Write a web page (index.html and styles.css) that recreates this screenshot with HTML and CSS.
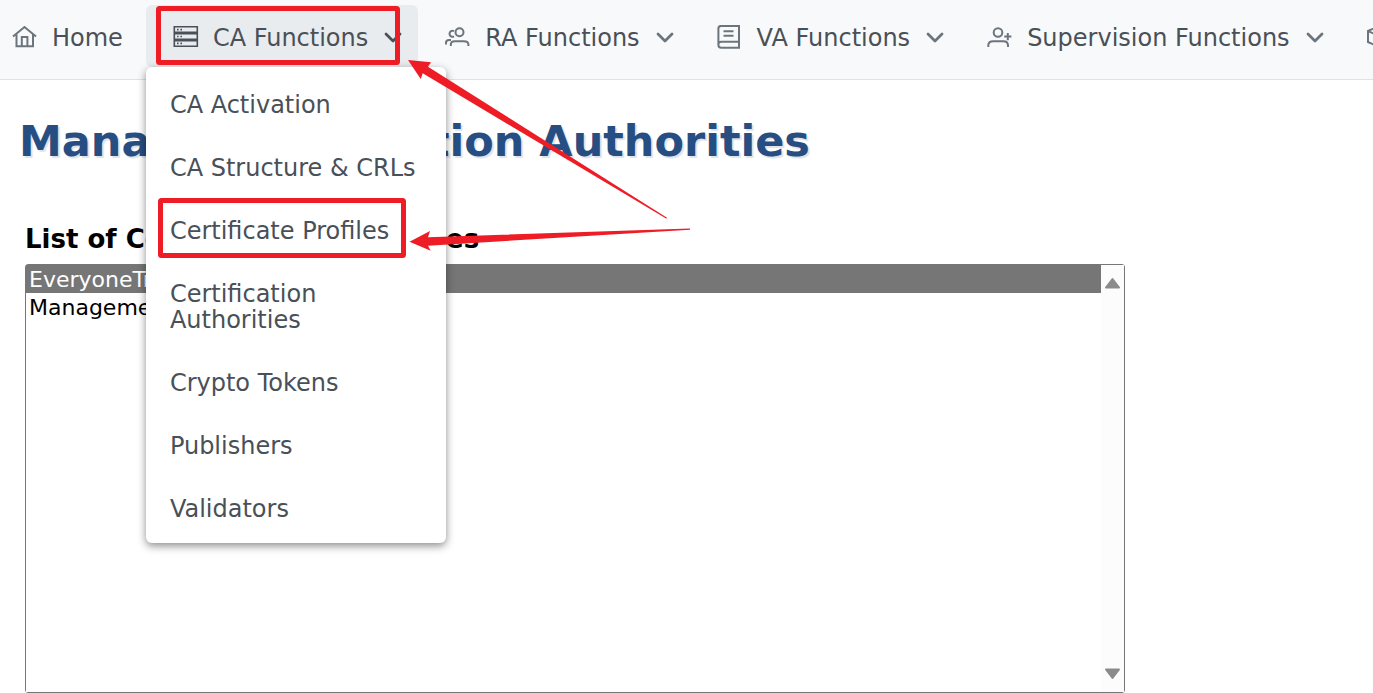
FILE: index.html
```html
<!DOCTYPE html>
<html lang="en">
<head>
    <meta charset="UTF-8">
    <meta name="viewport" content="width=device-width, initial-scale=1.0">
    <title>Manage Certification Authorities</title>
    <link rel="stylesheet" href="styles.css">
</head>
<body>
    <nav class="navbar">
        <a class="nav-item home" href="#">
            <svg class="icon" viewBox="0 2 26 26"><path d="M1 13.5 12.5 4 24 13.5M4.5 11.5V23.3H21V11.5M9.8 23V14h5.6v9"/></svg>
            <span>Home</span>
        </a>
        <div class="nav-group">
            <button class="nav-item active" type="button" aria-expanded="true">
                <svg class="icon" viewBox="0 2 26 26"><path d="M1.3 3.8h23v5.6h-23zM1.3 10.7h23v5.6h-23zM1.3 17.6h23v5.6h-23z"/><path class="dots" d="M4 6.6h1.6M7.4 6.6H9M4 13.5h1.6M7.4 13.5H9M4 20.4h1.6M7.4 20.4H9"/></svg>
                <span>CA Functions</span>
                <svg class="chevron" viewBox="0 2 22 26"><path d="m4 11 7 7 7-7"/></svg>
            </button>
            <div class="menu">
                <a href="#">CA Activation</a>
                <a href="#">CA Structure &amp; CRLs</a>
                <a href="#">Certificate Profiles</a>
                <a href="#">Certification Authorities</a>
                <a href="#">Crypto Tokens</a>
                <a href="#">Publishers</a>
                <a href="#">Validators</a>
            </div>
        </div>
        <button class="nav-item" type="button">
            <svg class="icon" viewBox="0 2 26 26"><circle cx="14.5" cy="9.3" r="4"/><path d="M5.8 23v-1.5q0-3.3 4-3.3h9q4.6 0 4.6 3.3V23M9 8.2a3 3 0 1 0 0 5.2M1 21.5v-1.7q0-2.8 3-2.8h2"/></svg>
            <span>RA Functions</span>
            <svg class="chevron" viewBox="0 2 22 26"><path d="m4 11 7 7 7-7"/></svg>
        </button>
        <button class="nav-item" type="button">
            <svg class="icon" viewBox="0 2 26 26"><path d="M22 18.8V2.9H4Q1.4 2.9 1.4 5.6V22q0 2.8 2.8 2.8H22v-6H4.2q-2.8 0-2.8 2.8M6.5 8.2h10M6.5 12.8h10"/></svg>
            <span>VA Functions</span>
            <svg class="chevron" viewBox="0 2 22 26"><path d="m4 11 7 7 7-7"/></svg>
        </button>
        <button class="nav-item" type="button">
            <svg class="icon" viewBox="0 2 26 26"><circle cx="11" cy="9.5" r="4.3"/><path d="M1.3 24v-1.5q0-4.3 5-4.3h10q4.7 0 4.7 4.3V24M20.8 10v7.2M17.2 13.6h7.2"/></svg>
            <span>Supervision Functions</span>
            <svg class="chevron" viewBox="0 2 22 26"><path d="m4 11 7 7 7-7"/></svg>
        </button>
        <button class="nav-item" type="button" aria-label="System Functions">
            <svg class="icon" viewBox="0 2 26 26"><path d="M1 8 12 3l11 5v11l-11 5-11-5zM1 8l11 5 11-5M12 13v11"/></svg>
        </button>
    </nav>

    <main class="content">
        <h1>Manage Certification Authorities</h1>
        <label for="caList">List of Certification Authorities</label>
        <div class="list-box">
            <select id="caList" class="ca-list" size="15">
                <option selected>EveryoneTrustCA</option>
                <option>ManagementCA</option>
            </select>
            <div class="scrollbar" aria-hidden="true">
                <svg width="17" height="12" viewBox="0 0 17 12"><path d="M2 10.500 8.500 2 15 10.500z"/></svg>
                <svg width="17" height="12" viewBox="0 0 17 12"><path d="M2 1.500 8.500 10 15 1.500z"/></svg>
            </div>
        </div>
    </main>

    <!-- highlights and arrows over the page -->
    <svg class="marks" width="700" height="270" viewBox="0 0 700 270">
        <rect x="158.500" y="8.500" width="239" height="54" rx="1"/>
        <rect x="160.500" y="200.500" width="243" height="55" rx="1"/>
        <path d="M408 60 431 62.300 428 66.700 667 217.800 666.500 218.800 422.700 73.300 420.700 79z"/>
        <path d="M409.500 241.700 430 231 428 237.300 690 228.500V229.700L428 245.700 430.700 250.700z"/>
    </svg>
</body>
</html>
```
FILE: styles.css
```css
* {
    box-sizing: border-box;
}

body {
    margin: 0;
    position: relative;
    font-family: "DejaVu Sans", Verdana, sans-serif;
    background-color: #fff;
    color: #000;
}

.navbar {
    display: flex;
    align-items: flex-start;
    height: 80px;
    padding-top: 5px;
    background-color: #f8f9fa;
    border-bottom: 1px solid #dee2e6;
    overflow-x: clip;
}

.nav-group {
    position: relative;
}

.nav-item {
    display: flex;
    flex-shrink: 0;
    align-items: center;
    gap: 14px;
    height: 62px;
    padding: 4px 14px 0 27px;
    border: none;
    border-radius: 6px;
    background: none;
    color: #495057;
    font-family: inherit;
    font-size: 24px;
    line-height: 26px;
    text-decoration: none;
    white-space: nowrap;
    cursor: pointer;
}

.nav-item.home {
    padding-left: 12px;
    padding-right: 23px;
}

.nav-item.active {
    background-color: #e9ecef;
}

.icon,
.chevron {
    flex-shrink: 0;
    width: 26px;
    height: 26px;
    fill: none;
    stroke: #6c757d;
    stroke-width: 2;
}

.active .icon {
    stroke-width: 1.6;
}

.chevron {
    width: 22px;
    stroke-width: 2.8;
    stroke-linecap: round;
    stroke-linejoin: round;
}

.active .icon,
.active .chevron {
    stroke: #495057;
}

.menu {
    position: absolute;
    top: 100%;
    left: 0;
    z-index: 10;
    display: flex;
    flex-direction: column;
    gap: 1px;
    width: 300px;
    padding: 7px 0 3px;
    border-radius: 6px;
    background-color: #fff;
    box-shadow: 0 3px 8px rgba(0, 0, 0, 0.45);
}

.menu a {
    padding: 18px 24px;
    color: #495057;
    font-size: 24px;
    line-height: 26px;
    text-decoration: none;
}

.content {
    padding: 33px 25px 0;
}

h1 {
    margin: 0 0 50px -6px;
    color: #274e82;
    font-size: 43px;
    line-height: 56px;
    text-shadow: 2px 2px 1px #dfe3e8;
}

label {
    display: block;
    margin-bottom: 5px;
    font-size: 26px;
    font-weight: bold;
    line-height: 40px;
}

.list-box {
    display: flex;
    width: 1100px;
    max-width: 100%;
    height: 429px;
    border: 1px solid #767676;
    border-radius: 3px;
}

.ca-list {
    flex: 1;
    min-width: 0;
    padding: 0;
    border: none;
    border-radius: 0;
    outline: none;
    background-color: #fff;
    font-family: inherit;
    font-size: 22px;
}

.ca-list option {
    min-height: 28px;
    padding: 2px 3px 0;
    color: #000;
    line-height: 26px;
}

.ca-list option:checked {
    background: #767676 linear-gradient(#767676, #767676);
    color: #fff;
}

.scrollbar {
    display: flex;
    flex-direction: column;
    align-items: center;
    justify-content: space-between;
    width: 23px;
    padding: 12px 0;
    background-color: #fcfcfc;
}

.scrollbar path {
    fill: #8b8b8b;
    stroke: #8b8b8b;
    stroke-width: 2;
    stroke-linejoin: round;
}

.marks {
    position: absolute;
    top: 0;
    left: 0;
    z-index: 20;
    pointer-events: none;
}

.marks rect {
    fill: none;
    stroke: #ee1c25;
    stroke-width: 5;
}

.marks path {
    fill: #ee1c25;
}
```
